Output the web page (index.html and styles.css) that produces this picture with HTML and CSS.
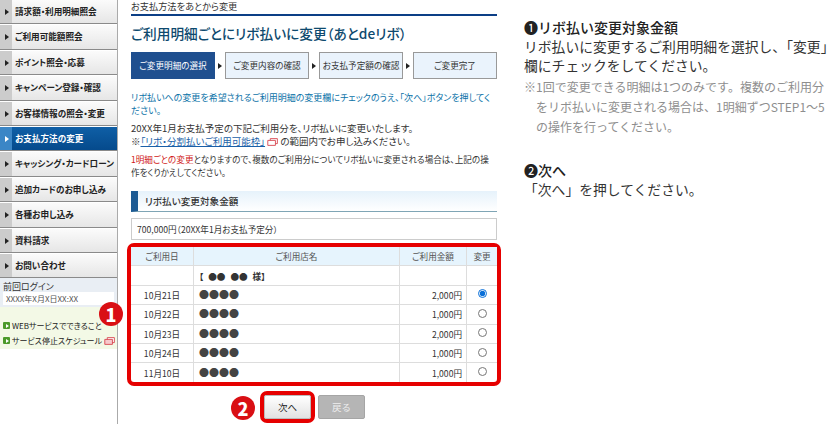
FILE: index.html
```html
<!DOCTYPE html>
<html lang="ja">
<head>
    <meta charset="UTF-8">
    <title>お支払方法の変更</title>
    <link rel="stylesheet" href="styles.css">
</head>
<body>
    <div id="page">
        <div id="side">
            <ul class="nav">
                <li>請求額・利用明細照会</li>
                <li>ご利用可能額照会</li>
                <li>ポイント照会・応募</li>
                <li>キャンペーン登録・確認</li>
                <li>お客様情報の照会・変更</li>
                <li class="on">お支払方法の変更</li>
                <li>キャッシング・カードローン</li>
                <li>追加カードのお申し込み</li>
                <li>各種お申し込み</li>
                <li>資料請求</li>
                <li>お問い合わせ</li>
            </ul>
            <div class="login">
                <div class="login-label">前回ログイン</div>
                <div class="login-value">XXXX年X月X日XX:XX</div>
            </div>
            <div class="side-links">
                <div class="side-link"><span class="go"></span>WEBサービスでできること</div>
                <div class="side-link"><span class="go"></span>サービス停止スケジュール
                    <svg class="win" viewBox="0 0 12 9"><path d="M3.5 .7h8v5.6h-8z" fill="#fff" stroke="#d8454f"/><path d="M.7 2.7h8.6v5.6H.7z" fill="#f7c9cc" stroke="#d8454f"/></svg>
                </div>
            </div>
            <span class="badge badge-one">1</span>
        </div>

        <div id="main">
            <div class="crumb">お支払方法をあとから変更</div>
            <h1>ご利用明細ごとにリボ払いに変更（あとdeリボ）</h1>
            <div class="steps">
                <div class="step on">ご変更明細の選択</div>
                <span class="step-arrow"></span>
                <div class="step">ご変更内容の確認</div>
                <span class="step-arrow"></span>
                <div class="step">お支払予定額の確認</div>
                <span class="step-arrow"></span>
                <div class="step">ご変更完了</div>
            </div>
            <p class="lead">リボ払いへの変更を希望されるご利用明細の変更欄にチェックのうえ、「次へ」ボタンを押してください。</p>
            <p class="txt">20XX年1月お支払予定の下記ご利用分を、リボ払いに変更いたします。<br>※<a href="#">「リボ・分割払いご利用可能枠」</a>
                <svg class="win" viewBox="0 0 12 9"><path d="M3.5 .7h8v5.6h-8z" fill="#fff" stroke="#d8454f"/><path d="M.7 2.7h8.6v5.6H.7z" fill="#fff" stroke="#d8454f"/></svg> の範囲内でお申し込みください。</p>
            <p class="txt gap"><span class="red">1明細ごとの変更</span>となりますので、複数のご利用分についてリボ払いに変更される場合は、上記の操作をくりかえしてください。</p>
            <h2>リボ払い変更対象金額</h2>
            <div class="amount">700,000円（20XX年1月お支払予定分）</div>
            <div class="frame">
                <table>
                    <tr><th class="c1">ご利用日</th><th>ご利用店名</th><th class="c3">ご利用金額</th><th class="c4">変更</th></tr>
                    <tr><td></td><td class="shop"><b class="holder">【 ●● ●● 様】</b></td><td></td><td></td></tr>
                    <tr><td class="date">10月21日</td><td class="shop dots">●●●●</td><td class="yen">2,000円</td><td class="pick"><input type="radio" name="m" checked></td></tr>
                    <tr><td class="date">10月22日</td><td class="shop dots">●●●●</td><td class="yen">1,000円</td><td class="pick"><input type="radio" name="m"></td></tr>
                    <tr><td class="date">10月23日</td><td class="shop dots">●●●●</td><td class="yen">2,000円</td><td class="pick"><input type="radio" name="m"></td></tr>
                    <tr><td class="date">10月24日</td><td class="shop dots">●●●●</td><td class="yen">1,000円</td><td class="pick"><input type="radio" name="m"></td></tr>
                    <tr><td class="date">11月10日</td><td class="shop dots">●●●●</td><td class="yen">1,000円</td><td class="pick"><input type="radio" name="m"></td></tr>
                </table>
            </div>
            <div class="buttons">
                <span class="badge badge-two">2</span>
                <div class="next-wrap"><button class="btn">次へ</button></div>
                <button class="btn back">戻る</button>
            </div>
        </div>

        <div id="notes">
            <h3>❶リボ払い変更対象金額</h3>
            <p>リボ払いに変更するご利用明細を選択し、「変更」欄にチェックをしてください。</p>
            <p class="note">※1回で変更できる明細は1つのみです。複数のご利用分をリボ払いに変更される場合は、1明細ずつSTEP1～5の操作を行ってください。</p>
            <h3 class="second">❷次へ</h3>
            <p>「次へ」を押してください。</p>
        </div>
    </div>
</body>
</html>
```

FILE: styles.css
```css
html, body {
    margin: 0;
    height: 424px;
    overflow: hidden;
    background: #fff;
}

body {
    font-family: "Noto Sans CJK JP", "Noto Sans", sans-serif;
    color: #333;
}

#page {
    display: flex;
    height: 424px;
}

/* left menu */
#side {
    width: 117px;
    height: 424px;
    border-right: 1px solid #aaa;
    position: relative;
    flex-shrink: 0;
    font-feature-settings: "palt";
}

.nav {
    list-style: none;
    margin: -1px 0 0;
    padding: 0;
}

.nav li {
    height: 23.4px;
    line-height: 23px;
    padding-left: 15px;
    font-size: 8.6px;
    font-weight: 700;
    color: #222;
    white-space: nowrap;
    border-top: 1px solid #fff;
    border-bottom: 1px solid #8a8a8a;
    background: linear-gradient(to right, #ccc 12px, transparent 12px), linear-gradient(#fbfbfb, #e6e6e6);
    position: relative;
}

.nav li::before {
    content: "";
    position: absolute;
    left: 5px;
    top: 9px;
    border-left: 4px solid #222;
    border-top: 3px solid transparent;
    border-bottom: 3px solid transparent;
}

.nav li.on {
    color: #fff;
    background: linear-gradient(to right, #3b86c6 12px, transparent 12px), linear-gradient(#0f5fa6, #054a8c);
}

.nav li.on::before {
    border-left-color: #fff;
}

.login {
    background: #e9eef4;
    height: 26px;
    padding: 3px 3px 0;
}

.login-label {
    font-size: 9px;
    line-height: 11px;
    color: #333;
}

.login-value {
    background: #fff;
    height: 13px;
    padding-left: 3px;
    font-size: 8px;
    line-height: 13px;
    color: #555;
}

.side-links {
    background: #f3f9e6;
    height: 31px;
    padding-top: 11px;
}

.side-link {
    display: flex;
    align-items: center;
    gap: 2px;
    padding-left: 3px;
    height: 15px;
    font-size: 8px;
    color: #222;
    white-space: nowrap;
}

.go {
    width: 7px;
    height: 7px;
    background: #4c9a2a;
    border-radius: 1px;
    position: relative;
    flex-shrink: 0;
}

.go::after {
    content: "";
    position: absolute;
    left: 2.5px;
    top: 1.5px;
    border-left: 3px solid #fff;
    border-top: 2px solid transparent;
    border-bottom: 2px solid transparent;
}

.win {
    width: 11px;
    height: 8px;
    vertical-align: -1px;
    flex-shrink: 0;
}

/* numbered markers */
.badge {
    position: absolute;
    width: 24px;
    height: 24px;
    border-radius: 50%;
    background: #d90f14;
    color: #fff;
    font-size: 18px;
    font-weight: 900;
    line-height: 24px;
    text-align: center;
}

.badge-one {
    left: 99px;
    top: 302px;
}

.badge-two {
    left: -29px;
    top: 5px;
}

/* main column */
#main {
    width: 366px;
    margin-left: 13px;
    flex-shrink: 0;
    font-feature-settings: "palt";
}

.crumb {
    font-size: 9.2px;
    line-height: 12px;
    height: 14px;
    border-bottom: 2px solid #0c3f86;
}

h1 {
    margin: 7px 0 0;
    font-size: 13.7px;
    line-height: 20px;
    font-weight: 500;
    color: #0e4a6e;
    white-space: nowrap;
}

.steps {
    display: flex;
    align-items: center;
    margin-top: 9px;
}

.step {
    width: 84px;
    height: 27px;
    box-sizing: border-box;
    border: 1px solid #999;
    background: #eaf3fc;
    font-size: 8.6px;
    line-height: 25px;
    text-align: center;
    white-space: nowrap;
    color: #333;
}

.step.on {
    background: #1f4f8f;
    border-color: #1f4f8f;
    color: #fff;
}

.step-arrow {
    width: 10px;
    display: flex;
    justify-content: center;
}

.step-arrow::after {
    content: "";
    border-left: 4px solid #222;
    border-top: 3px solid transparent;
    border-bottom: 3px solid transparent;
}

.lead {
    margin: 12px 0 0;
    font-size: 9px;
    line-height: 13px;
    color: #0b72a8;
}

.txt {
    margin: 5px 0 0;
    font-size: 9.5px;
    line-height: 13px;
    color: #333;
}

.txt.gap {
    margin-top: 5px;
    font-size: 8.6px;
}

.txt a {
    color: #1a5fa8;
}

.red {
    color: #d01818;
}

h2 {
    margin: 12px 0 0;
    height: 21px;
    box-sizing: border-box;
    border-left: 7px solid #1d5b94;
    border-bottom: 1px solid #7fa5b5;
    background: linear-gradient(#e6f2fb, #fff);
    padding-left: 7px;
    font-size: 9.6px;
    font-weight: 500;
    line-height: 20px;
}

.amount {
    margin-top: 6px;
    height: 22px;
    box-sizing: border-box;
    border: 1px solid #ccc;
    padding-left: 5px;
    font-size: 8.6px;
    line-height: 20px;
}

/* statement table inside the red frame */
.frame {
    margin: 3px -4px 0;
    border: 4px solid #e60000;
    border-radius: 7px;
    box-sizing: border-box;
    height: 143px;
}

table {
    border-collapse: collapse;
    width: 366px;
    table-layout: fixed;
    font-size: 8.6px;
}

th, td {
    border: 1px solid #ddd;
    height: 18.4px;
    padding: 0;
    line-height: 12px;
}

tr > :first-child {
    border-left: 0;
}

tr > :last-child {
    border-right: 0;
}

tr:first-child > * {
    border-top: 0;
}

tr:last-child > * {
    border-bottom: 0;
}

th {
    background: #e6f4fd;
    font-weight: 400;
    color: #555;
}

.c1 {
    width: 62px;
}

.c3 {
    width: 66px;
}

.c4 {
    width: 30px;
}

.date {
    text-align: center;
}

.shop {
    padding-left: 5px;
}

.holder {
    word-spacing: 3px;
}

.dots {
    font-size: 10px;
    color: #444;
}

.yen {
    text-align: right;
    padding-right: 4px;
}

.pick {
    text-align: center;
}

.pick input {
    width: 9px;
    height: 9px;
    accent-color: #0a6fd8;
    display: block;
    margin: 0 auto 2px;
}

.buttons {
    display: flex;
    align-items: flex-start;
    gap: 3px;
    margin: 5px 0 0 129px;
    position: relative;
    width: 110px;
}

.next-wrap {
    border: 4px solid #e60000;
    border-radius: 7px;
    height: 24px;
}

.btn {
    display: block;
    width: 47px;
    height: 24px;
    border: 1px solid #bbb;
    border-radius: 2px;
    background: linear-gradient(#fff, #e2e2e2);
    font-family: inherit;
    font-size: 9.5px;
    color: #222;
    padding: 0;
}

.btn.back {
    background: #b5b5b5;
    border-color: #a5a5a5;
    color: #eee;
    margin-top: 4px;
}

/* right column */
#notes {
    margin-left: 27px;
    width: 311px;
    padding-top: 17px;
}

#notes h3 {
    margin: 0;
    font-size: 14px;
    line-height: 20px;
    font-weight: 500;
    color: #222;
}

#notes h3.second {
    margin-top: 23px;
}

#notes p {
    margin: 0;
    font-size: 13.8px;
    line-height: 19px;
    color: #333;
}

#notes p.note {
    font-size: 12px;
    line-height: 20px;
    color: #8e8e8e;
    margin-top: 2px;
    padding-left: 12px;
    text-indent: -12px;
}
```
